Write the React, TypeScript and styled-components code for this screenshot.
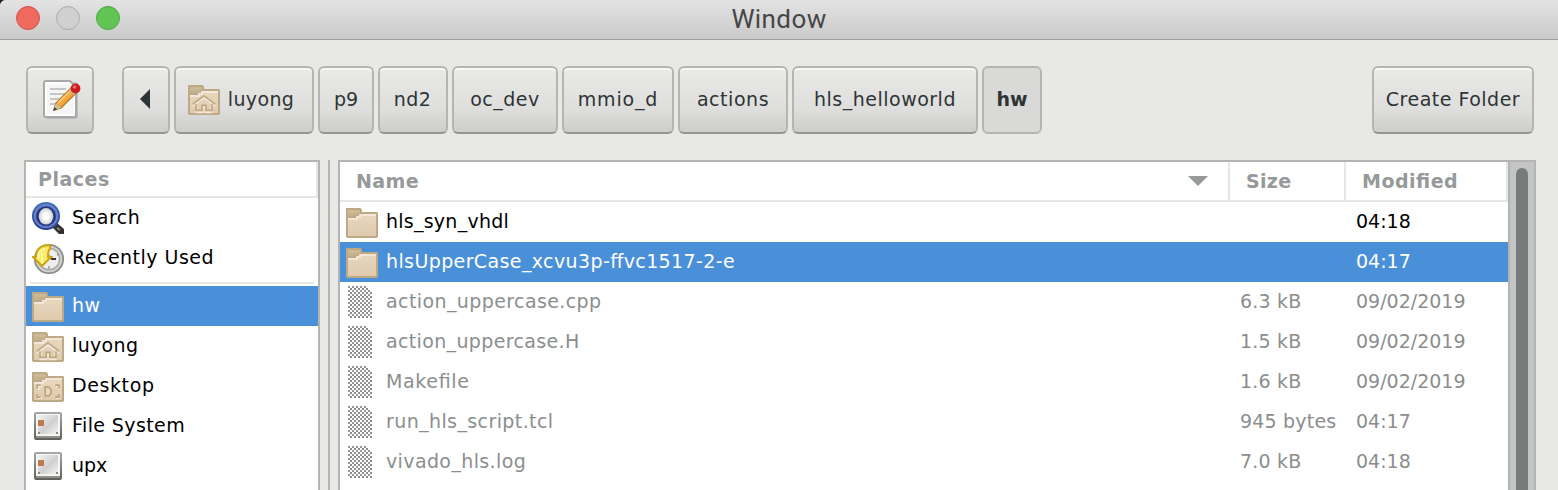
import React from "react";
import styled, { createGlobalStyle, css } from "styled-components";

const GlobalStyle = createGlobalStyle`
  * { box-sizing: border-box; }
  html, body { margin: 0; padding: 0; background: #24242c; overflow: hidden; }
  body { font-family: "DejaVu Sans", sans-serif; font-size: 19px; color: #000; }
`;

const Win = styled.div`
  width: 1558px;
  height: 490px;
  display: flex;
  flex-direction: column;
  overflow: hidden;
  border-top-left-radius: 6px;
  background: #e8e8e6;
`;

const TitleBar = styled.header`
  height: 40px;
  flex: none;
  display: grid;
  grid-template-columns: 1fr auto 1fr;
  border-bottom: 1px solid #9f9f9f;
  background: linear-gradient(#e3e3e3, #cacaca);
`;

const Lights = styled.div`
  display: flex;
  gap: 16px;
  padding: 6px 0 0 16px;
`;

const Light = styled.span<{ $fill: string; $edge: string }>`
  width: 24px;
  height: 24px;
  border-radius: 50%;
  background: ${(p) => p.$fill};
  border: 1px solid ${(p) => p.$edge};
`;

const Title = styled.h1`
  margin: 0;
  font: 400 26px/38px Roboto, sans-serif;
  letter-spacing: 0.4px;
  color: #464646;
`;

const Toolbar = styled.div`
  display: flex;
  flex: none;
  height: 120px;
  padding: 26px 24px 0 26px;
`;

const Path = styled.nav`
  display: flex;
  gap: 4px;
  margin-left: 28px;
  margin-right: auto;
`;

const Button = styled.button<{ $w: number; $active?: boolean; $trail?: number }>`
  width: ${(p) => p.$w}px;
  height: 68px;
  padding: 0 ${(p) => p.$trail ?? 0}px 2px 0;
  display: flex;
  align-items: center;
  justify-content: center;
  gap: 8px;
  border: 2px solid #b5b5b2;
  border-bottom-color: #949690;
  border-radius: 6px;
  background: linear-gradient(#e9e9e7, #dededc 65%, #cdcdcb);
  box-shadow: inset 0 2px 0 #f8f8f7;
  color: #2e3436;
  font: inherit;
  white-space: nowrap;
  ${(p) =>
    p.$active &&
    css`
      background: #d9d9d7;
      border-color: #b5b5b2;
      box-shadow: none;
      font-weight: 700;
    `}
`;

const Panes = styled.div`
  flex: 1;
  display: flex;
  padding: 0 22px 0 24px;
  min-height: 0;
`;

const Places = styled.aside`
  flex: none;
  width: 296px;
  border: 2px solid #b4b4b0;
  border-bottom: 0;
  background: #fff;
`;

const Handle = styled.div`
  flex: none;
  width: 2px;
  margin: 0 8px;
  background: #b4b4b0;
`;

const Files = styled.section`
  flex: 1;
  min-width: 0;
  display: flex;
  border: 2px solid #b4b4b0;
  border-bottom: 0;
  background: #fff;
`;

const Table = styled.div`
  flex: 1;
  min-width: 0;
`;

const PlacesHeader = styled.div`
  height: 36px;
  padding-left: 12px;
  border-right: 2px solid #e6e6e5;
  border-bottom: 2px solid #e6e6e5;
  color: #969999;
  font-weight: 700;
  line-height: 34px;
`;

const PlaceRow = styled.div<{ $selected?: boolean }>`
  height: 40px;
  padding: 0 6px;
  display: flex;
  align-items: center;
  gap: 8px;
  white-space: nowrap;
  color: ${(p) => (p.$selected ? "#fff" : "#000")};
  background: ${(p) => (p.$selected ? "#4a90d9" : "transparent")};
`;

const Separator = styled.div`
  height: 2px;
  margin: 4px 4px 2px;
  background: #e6e6e5;
`;

const TableHeader = styled.div`
  height: 40px;
  display: grid;
  grid-template-columns: 890px 116px 162px;
  border-bottom: 2px solid #e6e6e5;
`;

const HeaderCell = styled.div`
  display: flex;
  align-items: center;
  justify-content: space-between;
  padding: 0 20px 0 16px;
  border-right: 2px solid #e6e6e5;
  color: #969999;
  font-weight: 700;
`;

const FileRow = styled.div<{ $state: string }>`
  height: 40px;
  display: grid;
  grid-template-columns: 894px 116px 152px;
  align-items: center;
  padding-left: 6px;
  white-space: nowrap;
  color: ${(p) => (p.$state === "off" ? "#8b8e8e" : p.$state === "sel" ? "#fff" : "#000")};
  background: ${(p) => (p.$state === "sel" ? "#4a90d9" : "transparent")};
`;

const FileName = styled.div`
  display: flex;
  align-items: center;
  gap: 8px;
`;

const Label = styled.span<{ $ls?: number }>`
  letter-spacing: ${(p) => p.$ls ?? 0.4}px;
  font-feature-settings: "liga" 1;
`;

const RowLabel = styled(Label)`
  padding-bottom: 3px;
`;

const Scrollbar = styled.div`
  flex: none;
  width: 26px;
  padding: 6px 6px 0;
  border-left: 2px solid #b4b4b0;
  background: #c3c5c4;
`;

const Thumb = styled.div`
  width: 12px;
  height: 100%;
  border-radius: 6px 6px 0 0;
  background: #777b7c;
`;

const Icon = styled.svg`
  width: 32px;
  height: 32px;
  flex: none;
  display: block;
`;

const Folder = ({ mark }: { mark?: "home" | "desktop" }) => (
  <Icon viewBox="0 0 16 16">
    <defs>
      <linearGradient id="folderBody" x1="0" y1="0" x2="0" y2="1">
        <stop offset="0" stopColor="#e8d7c0" />
        <stop offset="1" stopColor="#dfcaae" />
      </linearGradient>
    </defs>
    <path d="M0 1h7.3l.7 1v1h7.6l.4.5v11.9l-.6.6H.6l-.6-.6z" fill="#bea987" />
    <path d="M1 2h6v1.5H1z" fill="#cbbb95" />
    <path d="M1 3.5h5V5H1z" fill="#c3b28b" />
    <path d="M1 6h4.5l2-2H15v11H1z" fill="url(#folderBody)" />
    <path d="M1 6h4V5h1.5V4H15v1H7.5v1H6v1H1z" fill="#f1e6d8" />
    {mark === "home" && (
      <g fill="none">
        <path d="M2.4 11.4 8 7.4l5.6 4M4.3 11.4v3.2h2.9v-2.4h1.6v2.4h2.9v-3.2" stroke="#f4eadd" strokeWidth="1" />
        <path d="M2.4 10.6 8 6.4l5.6 4.2M4 10.6v3.1h3v-2.5h2v2.5h3v-3.1" stroke="#c3aa86" strokeWidth=".9" />
      </g>
    )}
    {mark === "desktop" && (
      <g fill="none">
        <path d="M3.4 10V8.4H5M12 8.4h1.4V10M3.4 12.6V14H5M12 14h1.4v-1.4" stroke="#f4eadd" strokeWidth=".8" />
        <g stroke="#bfa681" strokeWidth=".9">
          <path d="M2.6 9.2V7.6h1.7M11.7 7.6h1.7v1.6M2.6 12v1.5h1.7M11.7 13.5h1.7V12" />
          <path d="M6.6 8.5h1.7l1.2 1.3v1.9l-1 1.2H6.6z" fill="#ead9c2" />
        </g>
      </g>
    )}
  </Icon>
);

const SearchIcon = () => (
  <Icon viewBox="0 0 32 32">
    <defs>
      <radialGradient id="lens">
        <stop offset="0.35" stopColor="#fff" />
        <stop offset="1" stopColor="#cfcfd2" />
      </radialGradient>
      <linearGradient id="rim" x1="0" y1="0" x2="0" y2="1">
        <stop offset="0" stopColor="#3f76bd" />
        <stop offset="1" stopColor="#2b3c91" />
      </linearGradient>
    </defs>
    <path d="M22 23l3-2 7 6v5h-5l-6-6z" fill="#33312f" />
    <path d="M25 26l3 2" stroke="#8c8780" strokeWidth="2" />
    <circle cx="14" cy="14" r="14" fill="url(#rim)" />
    <circle cx="14" cy="14" r="11.2" fill="none" stroke="#6f80c8" strokeWidth="1.8" />
    <circle cx="14" cy="14" r="9.6" fill="#27357f" />
    <ellipse cx="14" cy="14.3" rx="7.3" ry="8.3" fill="url(#lens)" />
  </Icon>
);

const RecentIcon = () => (
  <Icon viewBox="0 0 32 32">
    <circle cx="17" cy="17" r="14.2" fill="#d2d4cf" stroke="#8a8d88" strokeWidth="1.8" />
    <circle cx="17" cy="17" r="10.7" fill="#eeeeec" stroke="#a9aba7" strokeWidth="1.6" />
    <path d="M17 14l3 3h4" fill="none" stroke="#343634" strokeWidth="2" />
    <path d="M17 24v3M25 13l2-1" stroke="#999b98" strokeWidth="1.5" />
    <path d="M1 15h3c0-8 4-12 14-12v4c-2 1-2 4-2 8h3l-9 9z" fill="#fbe968" stroke="#caa616" strokeWidth="2" />
    <path d="M6 17c0-6 2-9 7-10M10 11v10" fill="none" stroke="#fff5a3" strokeWidth="2" />
  </Icon>
);

const DriveIcon = () => (
  <Icon viewBox="0 0 32 32">
    <defs>
      <linearGradient id="drive" x1="0" y1="0" x2="1" y2="1">
        <stop offset="0" stopColor="#f4f4f4" />
        <stop offset=".55" stopColor="#cfcfd0" />
        <stop offset="1" stopColor="#f5f5f5" />
      </linearGradient>
      <linearGradient id="driveEdge" x1="0" y1="0" x2="0" y2="1">
        <stop offset="0" stopColor="#a9aaa7" />
        <stop offset="1" stopColor="#5d5f5a" />
      </linearGradient>
    </defs>
    <rect x="2" y="2" width="28" height="28" rx="2" fill="url(#driveEdge)" />
    <rect x="4" y="4" width="24" height="22" fill="#f5f5f4" />
    <rect x="6" y="5" width="20" height="19" rx="1" fill="url(#drive)" />
    <rect x="4" y="26" width="24" height="2" fill="#8f918c" />
    <rect x="6" y="10" width="6" height="6" fill="#bf7b4b" />
    <path d="M6 22h2v2H6zM24 22h2v2h-2z" fill="#8a8a8a" />
  </Icon>
);

const FileIcon = () => {
  const cells = [];
  for (let y = 0; y < 16; y++)
    for (let x = 0; x < 12; x++) {
      if ((x + y) % 2 !== 0 || x - y > 8) continue;
      cells.push(
        <rect key={`${x}-${y}`} x={x + 1} y={y} width="1" height="1" fill={y % 2 ? "#8b8b8b" : "#969696"} />,
      );
    }
  return (
    <Icon viewBox="0 0 16 16" shapeRendering="crispEdges">
      {cells}
    </Icon>
  );
};

const EditIcon = styled(({ className }: { className?: string }) => (
  <svg className={className} viewBox="0 0 40 40">
    <rect x="3" y="2" width="33" height="37" rx="3" fill="#9a9b98" opacity=".45" />
    <path d="M4 1h24l6 6v28q0 2-2 2H4q-2 0-2-2V3q0-2 2-2z" fill="#fff" stroke="#a8a9a6" strokeWidth="2" />
    <path d="M5 4h20l7 7v23H5z" fill="#f5f5f5" />
    <path d="M8 9h16M8 14h15M8 19h11M8 24h7" stroke="#c4c5c4" strokeWidth="2" />
    <path d="M12 30l2-7L30 7l5 5-16 16z" fill="#f4a63a" stroke="#b37620" strokeWidth="1.4" />
    <path d="M16 23L30 9" stroke="#fbc876" strokeWidth="2" />
    <path d="M11 31l3-8 5 5z" fill="#cdbf94" />
    <path d="M11 31l1.4-4 3 2.4z" fill="#4e4b3d" />
    <path d="M27 10l3-3 5 5-3 3z" fill="#b9bab5" />
    <circle cx="33.5" cy="8.5" r="4.9" fill="#cf1b1f" />
    <circle cx="32.5" cy="7" r="1.8" fill="#ee6a66" />
  </svg>
))`
  width: 40px;
  height: 40px;
  flex: none;
  margin: 2px 0 0 4px;
`;

const BackArrow = () => (
  <svg width="10" height="20" viewBox="0 0 10 20">
    <path d="M10 0v20L0 10z" fill="#2e3436" />
  </svg>
);

const SortArrow = () => (
  <svg width="20" height="10" viewBox="0 0 20 10">
    <path d="M0 0h20L10 10z" fill="#969999" />
  </svg>
);

const crumbs = [
  { name: "p9", w: 56, ls: 0 },
  { name: "nd2", w: 70, ls: 0.4, trail: 1 },
  { name: "oc_dev", w: 106, ls: 0.5 },
  { name: "mmio_d", w: 112, ls: 0.85 },
  { name: "actions", w: 110, ls: 0.55 },
  { name: "hls_helloworld", w: 186, ls: 0.5 },
  { name: "hw", w: 60, ls: 0, active: true },
];

const files = [
  { name: "hls_syn_vhdl", ls: 0.25, size: "", date: "04:18", state: "on" },
  { name: "hlsUpperCase_xcvu3p-ffvc1517-2-e", ls: 0.39, size: "", date: "04:17", state: "sel" },
  { name: "action_uppercase.cpp", ls: 0.4, size: "6.3 kB", date: "09/02/2019", state: "off" },
  { name: "action_uppercase.H", ls: 0.35, size: "1.5 kB", date: "09/02/2019", state: "off" },
  { name: "Makefile", ls: 0.65, size: "1.6 kB", date: "09/02/2019", state: "off" },
  { name: "run_hls_script.tcl", ls: 0.4, size: "945 bytes", date: "04:17", state: "off" },
  { name: "vivado_hls.log", ls: 0.38, size: "7.0 kB", date: "04:18", state: "off" },
];

export default function App() {
  return (
    <>
      <GlobalStyle />
      <Win>
        <TitleBar>
          <Lights>
            <Light $fill="#ef6a5e" $edge="#d2524a" />
            <Light $fill="#d0d0d0" $edge="#adadad" />
            <Light $fill="#61c554" $edge="#4ba73f" />
          </Lights>
          <Title>Window</Title>
        </TitleBar>
        <Toolbar>
          <Button $w={68} aria-label="Type a file name">
            <EditIcon />
          </Button>
          <Path>
            <Button $w={48} $trail={2} aria-label="Back">
              <BackArrow />
            </Button>
            <Button $w={140} $trail={6}>
              <Folder mark="home" />
              <Label $ls={0.35}>luyong</Label>
            </Button>
            {crumbs.map((c) => (
              <Button key={c.name} $w={c.w} $active={c.active} $trail={c.trail}>
                <Label $ls={c.ls}>{c.name}</Label>
              </Button>
            ))}
          </Path>
          <Button $w={162}>
            <Label $ls={0.5}>Create Folder</Label>
          </Button>
        </Toolbar>
        <Panes>
          <Places>
            <PlacesHeader><Label $ls={0.5}>Places</Label></PlacesHeader>
            <PlaceRow><SearchIcon /><RowLabel $ls={0.5}>Search</RowLabel></PlaceRow>
            <PlaceRow><RecentIcon /><RowLabel $ls={0.48}>Recently Used</RowLabel></PlaceRow>
            <Separator />
            <PlaceRow $selected><Folder /><RowLabel>hw</RowLabel></PlaceRow>
            <PlaceRow><Folder mark="home" /><RowLabel $ls={0.35}>luyong</RowLabel></PlaceRow>
            <PlaceRow><Folder mark="desktop" /><RowLabel $ls={0.6}>Desktop</RowLabel></PlaceRow>
            <PlaceRow><DriveIcon /><RowLabel>File System</RowLabel></PlaceRow>
            <PlaceRow><DriveIcon /><RowLabel $ls={0}>upx</RowLabel></PlaceRow>
          </Places>
          <Handle />
          <Files>
            <Table>
              <TableHeader>
                <HeaderCell><Label>Name</Label><SortArrow /></HeaderCell>
                <HeaderCell><Label $ls={0.3}>Size</Label></HeaderCell>
                <HeaderCell><Label $ls={0.5}>Modified</Label></HeaderCell>
              </TableHeader>
              {files.map((f) => (
                <FileRow key={f.name} $state={f.state}>
                  <FileName>
                    {f.state === "off" ? <FileIcon /> : <Folder />}
                    <RowLabel $ls={f.ls}>{f.name}</RowLabel>
                  </FileName>
                  <RowLabel $ls={0.2}>{f.size}</RowLabel>
                  <RowLabel $ls={0}>{f.date}</RowLabel>
                </FileRow>
              ))}
            </Table>
            <Scrollbar>
              <Thumb />
            </Scrollbar>
          </Files>
        </Panes>
      </Win>
    </>
  );
}
